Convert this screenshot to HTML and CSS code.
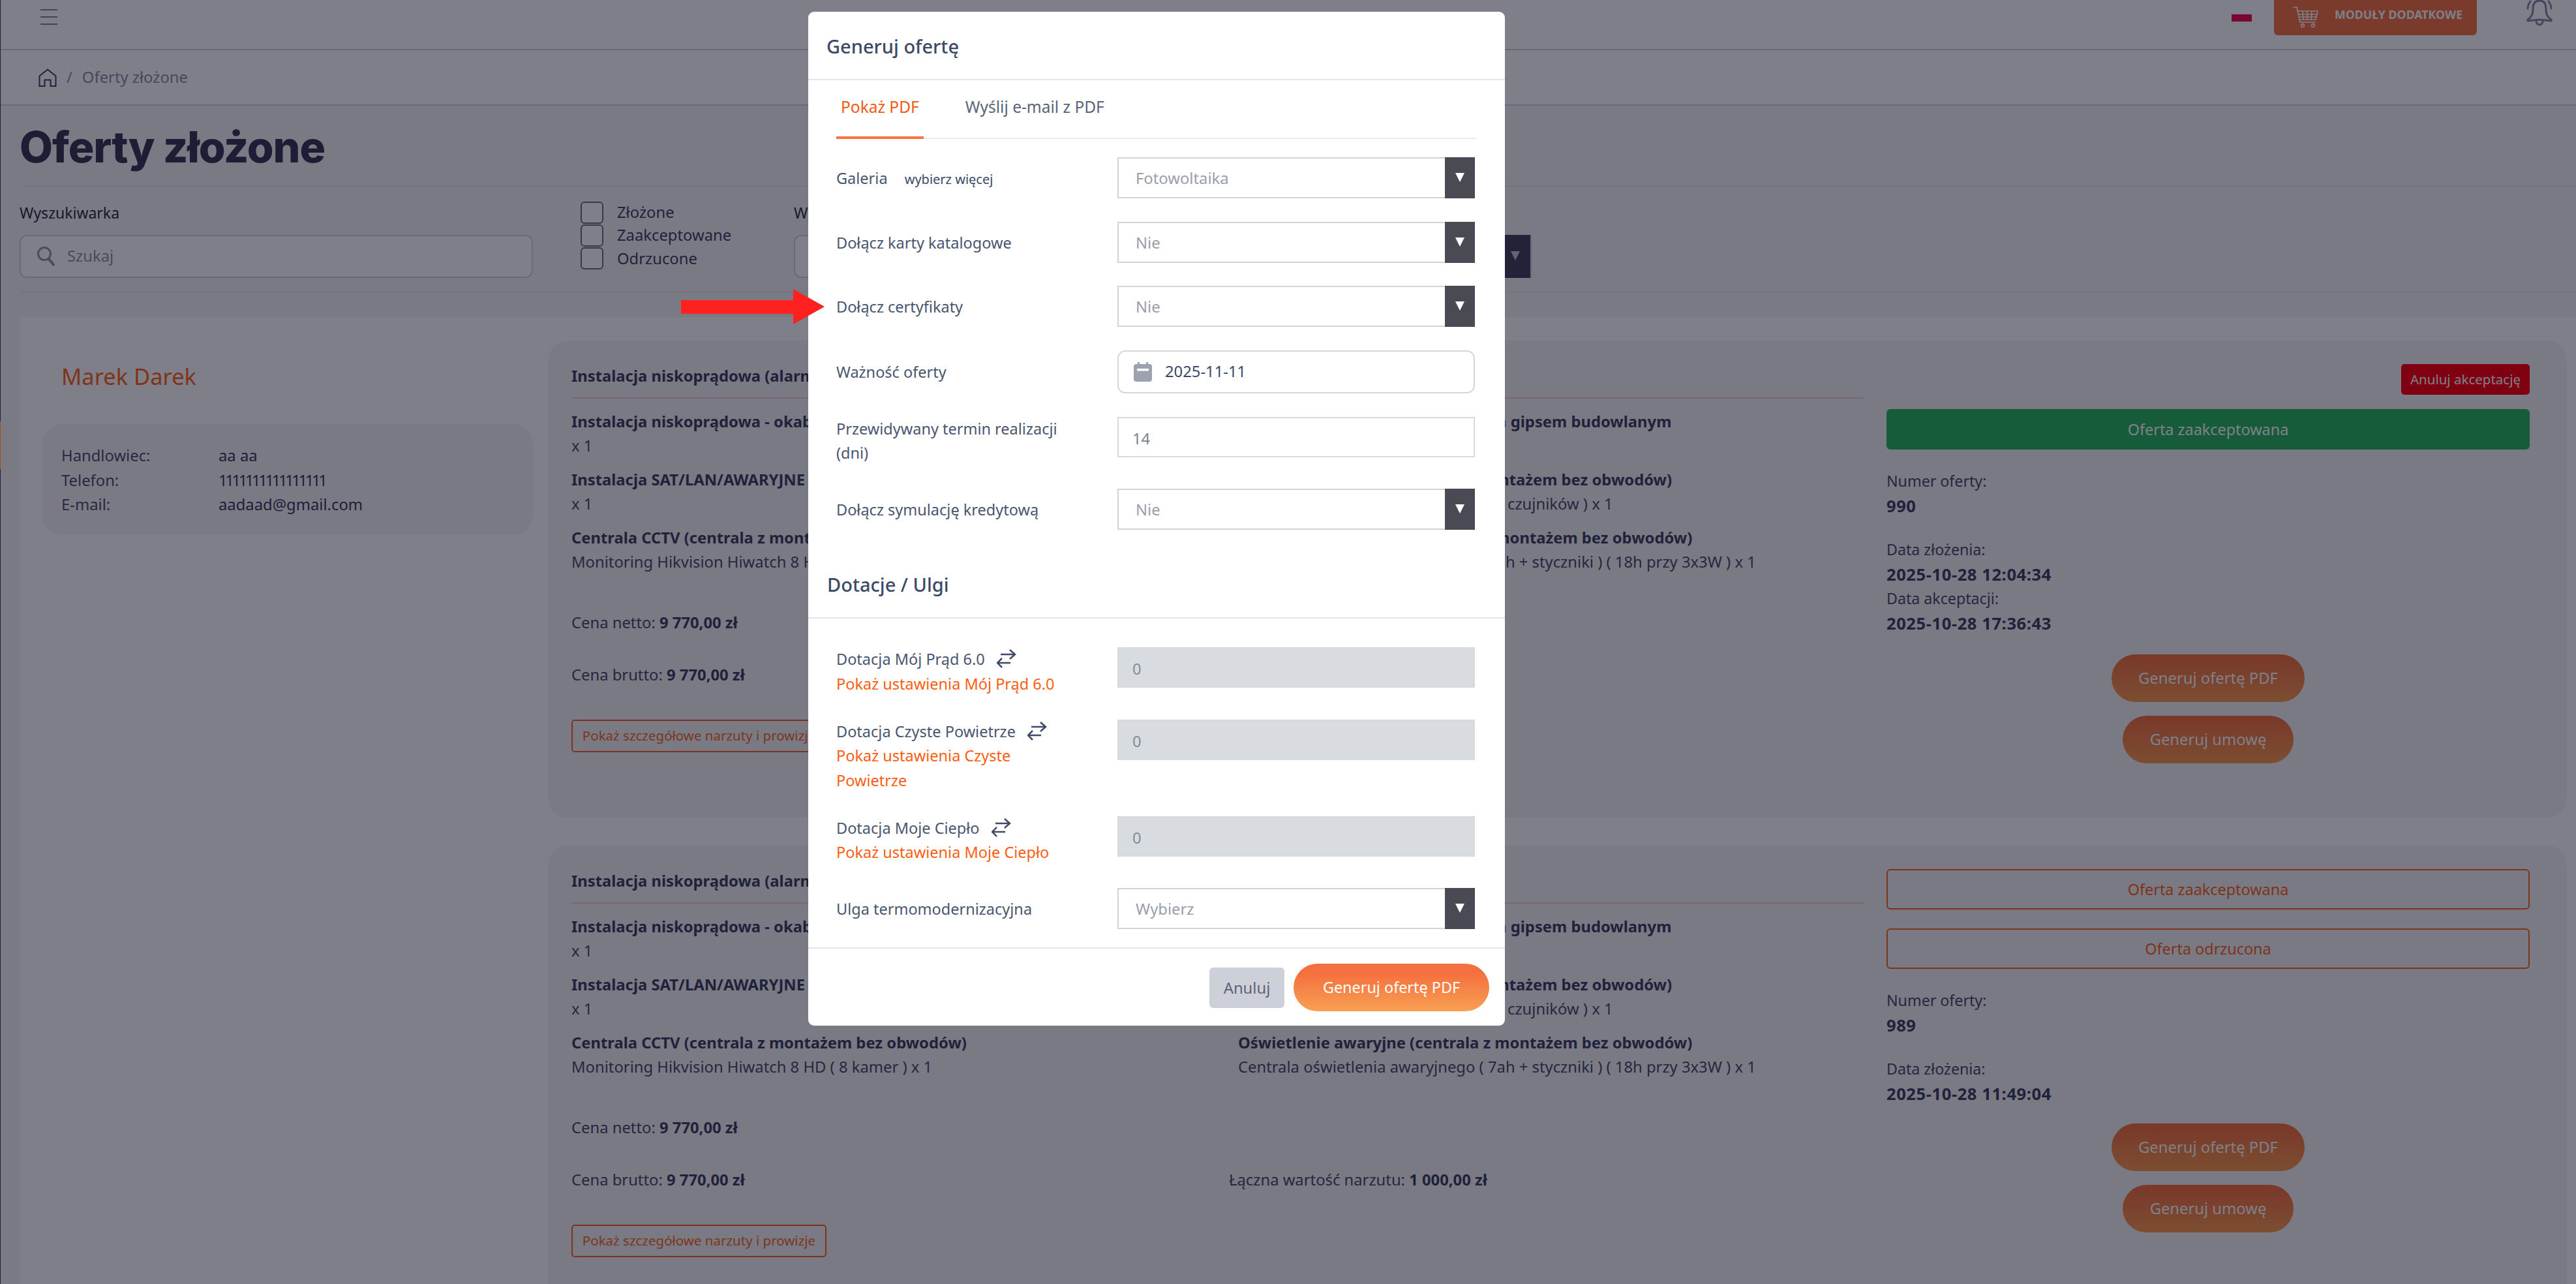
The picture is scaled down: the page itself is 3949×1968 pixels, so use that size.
FILE: index.html
```html
<!DOCTYPE html>
<html lang="pl">
<head>
<meta charset="utf-8">
<title>Oferty złożone</title>
<link rel="stylesheet" href="styles.css">
</head>
<body>
<div class="page">
  <header class="topbar">
    <div class="burger"><i></i><i></i><i></i></div>
    <div class="top-actions">
      <span class="flag"></span>
      <a class="modules">
        <svg class="cart" viewBox="0 0 42 32" width="42" height="32" fill="none" stroke="currentColor" stroke-width="1.7"><path d="M1 1h6l5 23h24M9 7h30l-3 13H12M16 7l1 13M23 7v13M30 7l-1 13M38 7M10 12h28M11 16h26"/><circle cx="16" cy="29" r="2.4"/><circle cx="32" cy="29" r="2.4"/></svg>
        <span>MODUŁY DODATKOWE</span>
      </a>
      <svg class="bell" viewBox="0 0 44 44" width="44" height="44" fill="none" stroke="currentColor" stroke-width="3" stroke-linecap="round" stroke-linejoin="round"><path d="M22 1c-7 0-10 5-10 12 0 9-2 13-8 17v2l18-2 18 2v-2c-6-4-8-8-8-17 0-7-3-12-10-12z"/><path d="M17 32a5 6 0 0 0 10 0"/><path d="M4 13c0-4 2-8 4-11M40 13c0-4-2-8-4-11"/></svg>
    </div>
  </header>

  <nav class="crumbs">
    <svg class="home" viewBox="0 0 28 28" width="28" height="28" fill="none" stroke="currentColor" stroke-width="2"><path d="M1.5 27V11.500L14 1.500 26.500 11.500V27H18.500V17.500H9.500V27Z"/></svg>
    <span class="sep">/</span>
    <span>Oferty złożone</span>
  </nav>

  <h1 class="title">Oferty złożone</h1>

  <section class="filters">
    <div class="f-search">
      <label class="f-label">Wyszukiwarka</label>
      <div class="search">
        <svg viewBox="0 0 30 32" width="30" height="32" fill="none" stroke="currentColor" stroke-width="3"><circle cx="12" cy="12" r="9.500"/><path d="M19 20l8 10" stroke-width="4"/></svg>
        <span>Szukaj</span>
      </div>
    </div>
    <div class="f-checks">
      <div class="check"><i></i>Złożone</div>
      <div class="check"><i></i>Zaakceptowane</div>
      <div class="check"><i></i>Odrzucone</div>
    </div>
    <div class="f-select">
      <label class="f-label">Wybierz</label>
      <div class="dark-select"><b class="tri"></b></div>
    </div>
  </section>

  <main class="panel">
    <aside class="client">
      <h2 class="client-name">Marek Darek</h2>
      <dl class="client-box">
        <dt>Handlowiec:</dt><dd>aa aa</dd>
        <dt>Telefon:</dt><dd class="phone">1111111111111111</dd>
        <dt>E-mail:</dt><dd>aadaad@gmail.com</dd>
      </dl>
    </aside>
    <div class="offers">
      <article class="offer">
        <div class="o-main">
          <h3 class="o-head">Instalacja niskoprądowa (alarm, CCTV, SAT, LAN)</h3>
          <div class="o-items">
            <div class="item"><b>Instalacja niskoprądowa - okablowanie</b><span>x 1</span></div>
            <div class="item"><b>Tynkowanie ścian z wykończeniem gipsem budowlanym</b><span>x 1</span></div>
            <div class="item"><b>Instalacja SAT/LAN/AWARYJNE - okablowanie</b><span>x 1</span></div>
            <div class="item"><b>Centrala alarmowa (centrala z montażem bez obwodów)</b><span>Centrala alarmowa Satel Integra ( 24 czujników ) x 1</span></div>
            <div class="item"><b>Centrala CCTV (centrala z montażem bez obwodów)</b><span>Monitoring Hikvision Hiwatch 8 HD ( 8 kamer ) x 1</span></div>
            <div class="item"><b>Oświetlenie awaryjne (centrala z montażem bez obwodów)</b><span>Centrala oświetlenia awaryjnego ( 7ah + styczniki ) ( 18h przy 3x3W ) x 1</span></div>
          </div>
          <p class="price netto">Cena netto: <b>9 770,00 zł</b></p>
          <p class="price brutto">Cena brutto: <b>9 770,00 zł</b></p>
          <a class="outline-sm">Pokaż szczegółowe narzuty i prowizje</a>
        </div>
        <div class="o-side">
          <a class="cancel">Anuluj akceptację</a>
          <div class="state accepted">Oferta zaakceptowana</div>
          <div class="meta">
            <p>Numer oferty:<b>990</b></p>
            <p class="gap">Data złożenia:<b>2025-10-28 12:04:34</b></p>
            <p>Data akceptacji:<b>2025-10-28 17:36:43</b></p>
          </div>
          <div class="gen">
            <a class="pill p-pdf">Generuj ofertę PDF</a>
            <a class="pill p-umowa">Generuj umowę</a>
          </div>
        </div>
      </article>

      <article class="offer">
        <div class="o-main">
          <h3 class="o-head">Instalacja niskoprądowa (alarm, CCTV, SAT, LAN)</h3>
          <div class="o-items">
            <div class="item"><b>Instalacja niskoprądowa - okablowanie</b><span>x 1</span></div>
            <div class="item"><b>Tynkowanie ścian z wykończeniem gipsem budowlanym</b><span>x 1</span></div>
            <div class="item"><b>Instalacja SAT/LAN/AWARYJNE - okablowanie</b><span>x 1</span></div>
            <div class="item"><b>Centrala alarmowa (centrala z montażem bez obwodów)</b><span>Centrala alarmowa Satel Integra ( 24 czujników ) x 1</span></div>
            <div class="item"><b>Centrala CCTV (centrala z montażem bez obwodów)</b><span>Monitoring Hikvision Hiwatch 8 HD ( 8 kamer ) x 1</span></div>
            <div class="item"><b>Oświetlenie awaryjne (centrala z montażem bez obwodów)</b><span>Centrala oświetlenia awaryjnego ( 7ah + styczniki ) ( 18h przy 3x3W ) x 1</span></div>
          </div>
          <p class="price netto">Cena netto: <b>9 770,00 zł</b></p>
          <div class="price brutto split">
            <span>Cena brutto: <b>9 770,00 zł</b></span>
            <span>Łączna wartość narzutu: <b>1 000,00 zł</b></span>
          </div>
          <a class="outline-sm">Pokaż szczegółowe narzuty i prowizje</a>
        </div>
        <div class="o-side">
          <div class="state outlined">Oferta zaakceptowana</div>
          <div class="state outlined second">Oferta odrzucona</div>
          <div class="meta">
            <p>Numer oferty:<b>989</b></p>
            <p class="gap">Data złożenia:<b>2025-10-28 11:49:04</b></p>
          </div>
          <div class="gen tight">
            <a class="pill p-pdf">Generuj ofertę PDF</a>
            <a class="pill p-umowa">Generuj umowę</a>
          </div>
        </div>
      </article>
    </div>
  </main>
</div>

<div class="overlay"></div>
<i class="edge-mark"></i>

<div class="modal">
  <div class="m-head">Generuj ofertę</div>
  <div class="tabs">
    <a class="tab active">Pokaż PDF</a>
    <a class="tab">Wyślij e-mail z PDF</a>
  </div>
  <div class="m-rows">
    <div class="row mid"><div class="lbl">Galeria <small>wybierz więcej</small></div><div class="sel ph">Fotowoltaika<b class="tri"></b></div></div>
    <div class="row mid"><div class="lbl">Dołącz karty katalogowe</div><div class="sel ph">Nie<b class="tri"></b></div></div>
    <div class="row mid"><div class="lbl">Dołącz certyfikaty</div><div class="sel ph">Nie<b class="tri"></b></div></div>
    <div class="row mid date-row"><div class="lbl">Ważność oferty</div>
      <div class="date">
        <svg viewBox="0 0 28 30" width="28" height="30"><path fill="#9ea2ae" d="M6 0h3v3h10V0h3v3h2a4 4 0 0 1 4 4v19a4 4 0 0 1-4 4H4a4 4 0 0 1-4-4V7a4 4 0 0 1 4-4h2z"/><rect x="5" y="10" width="18" height="3.500" rx="1" fill="#fff"/></svg>
        <span>2025-11-11</span>
      </div>
    </div>
    <div class="row"><div class="lbl">Przewidywany termin realizacji (dni)</div><div class="inp">14</div></div>
    <div class="row mid last"><div class="lbl">Dołącz symulację kredytową</div><div class="sel ph">Nie<b class="tri"></b></div></div>
  </div>
  <div class="m-sub">Dotacje / Ulgi</div>
  <div class="m-rows sub-rows">
    <div class="row"><div class="lbl">Dotacja Mój Prąd 6.0 <svg class="swap" viewBox="0 0 30 30" width="30" height="30" fill="none" stroke="currentColor" stroke-width="2.500"><path d="M6 8h22M20 1l8 7-8 7M21 21H1M8 14l-7 7 7 7"/></svg><a class="lnk">Pokaż ustawienia Mój Prąd 6.0</a></div><div class="inp off">0</div></div>
    <div class="row"><div class="lbl">Dotacja Czyste Powietrze <svg class="swap" viewBox="0 0 30 30" width="30" height="30" fill="none" stroke="currentColor" stroke-width="2.500"><path d="M6 8h22M20 1l8 7-8 7M21 21H1M8 14l-7 7 7 7"/></svg><a class="lnk">Pokaż ustawienia Czyste Powietrze</a></div><div class="inp off">0</div></div>
    <div class="row"><div class="lbl">Dotacja Moje Ciepło <svg class="swap" viewBox="0 0 30 30" width="30" height="30" fill="none" stroke="currentColor" stroke-width="2.500"><path d="M6 8h22M20 1l8 7-8 7M21 21H1M8 14l-7 7 7 7"/></svg><a class="lnk">Pokaż ustawienia Moje Ciepło</a></div><div class="inp off">0</div></div>
    <div class="row mid last"><div class="lbl">Ulga termomodernizacyjna</div><div class="sel ph">Wybierz<b class="tri"></b></div></div>
  </div>
  <div class="m-foot">
    <a class="btn-cancel">Anuluj</a>
    <a class="pill-main">Generuj ofertę PDF</a>
  </div>
</div>

<svg class="red-arrow" viewBox="0 0 220 54" width="220" height="54"><path fill="#ff2020" d="M0 17h172V0l48 27-48 27V38H0z"/></svg>
</body>
</html>
```

FILE: styles.css
```css
* { box-sizing: border-box; }
html, body { margin: 0; height: 100%; overflow: hidden; }
body {
  font-family: "Noto Sans", "Open Sans", sans-serif;
  font-size: 23.800px;
  line-height: 37.5px;
  color: #414762;
  background: #f4f4f6;
}
a { display: block; }
p, h1, h2, h3, dl, dd { margin: 0; }

.page { border-left: 1px solid #3a3c5c; height: 100vh; overflow: hidden; }

/* top bar */
.topbar {
  height: 77px;
  background: #fff;
  border-bottom: 2px solid #d2d2da;
  display: flex;
  justify-content: space-between;
  padding-left: 61px;
}
.burger { width: 26px; padding-top: 14px; display: flex; flex-direction: column; gap: 9px; }
.burger i { display: block; height: 2px; background: #84869c; }
.top-actions { display: flex; align-items: flex-start; }
.flag { width: 31px; height: 22px; margin: 11px 34px 0 0; background: linear-gradient(#fff 50%, #f0104e 50%); }
.modules {
  width: 311px;
  height: 54px;
  margin-right: 74px;
  display: flex;
  align-items: center;
  padding: 0 0 8px 28px;
  background: #f47444;
  border-radius: 0 0 6px 6px;
  color: #fff;
  font-size: 17.800px;
  font-weight: 700;
}
.modules span { margin-left: 23px; }
.cart { margin-top: 6px; }
.bell { color: #8a8ca4; margin-right: 34px; }

/* breadcrumbs */
.crumbs {
  height: 85px;
  background: #fff;
  border-bottom: 2px solid #d0d0dc;
  display: flex;
  align-items: center;
  padding-left: 58px;
  color: #8d92a8;
}
.home { color: #3e4468; margin-right: 15px; }
.sep { margin-right: 15px; }

/* title and filters */
.title {
  height: 122px;
  margin-left: 29px;
  padding-top: 28px;
  font-family: "Inter", sans-serif;
  font-weight: 800;
  font-size: 66px;
  line-height: 70px;
  letter-spacing: -1.100px;
  color: #3a3c56;
}
.filters {
  margin-left: 29px;
  height: 165px;
  padding-top: 22px;
  border-top: 2px solid #eaeaee;
  border-bottom: 2px solid #eaeaee;
  display: flex;
}
.f-label { display: block; margin-bottom: 14px; color: #2e3040; font-size: 23px; }
.f-search { width: 787px; margin-right: 73px; }
.search {
  height: 66px;
  border: 2px solid #d2d2de;
  border-radius: 11px;
  background: #fff;
  display: flex;
  align-items: center;
  padding-left: 24px;
  gap: 17px;
  color: #9497a9;
}
.f-checks { width: 327px; }
.check { height: 35.300px; display: flex; align-items: center; gap: 21px; color: #414762; line-height: 35px; }
.check i { display: block; width: 35px; height: 34px; border: 2px solid #6e7086; border-radius: 6px; background: #fff; }
.f-select { width: 1131px; }
.dark-select {
  height: 66px;
  border: 2px solid #d2d2de;
  border-radius: 11px 0 0 11px;
  background: #fff;
  position: relative;
}
.dark-select .tri { position: absolute; right: 0; top: -2px; width: 60px; height: 66px; background: #44465c; }
.dark-select .tri::after {
  content: "";
  position: absolute;
  right: 16px;
  top: 25px;
  border: 7px solid transparent;
  border-top: 14px solid #c8c8d4;
  border-bottom: 0;
}

/* panel */
.panel {
  margin: 37px 0 0 29px;
  padding-top: 36px;
  background: #fff;
  display: flex;
  height: 1600px;
}
.client { width: 810px; padding-left: 35px; flex: none; }
.client-name {
  padding: 35px 0 0 29px;
  height: 128px;
  font-size: 34.500px;
  font-weight: 400;
  line-height: 40px;
  color: #fb6a1e;
}
.client-box {
  width: 752px;
  height: 170px;
  padding: 30px 29px;
  background: #f4f4f6;
  border-radius: 30px;
  display: grid;
  grid-template-columns: 241px 1fr;
}
.client-box dt { color: #4e546e; }
.client-box dd { color: #3a3f5c; }
.client-box .phone { letter-spacing: -3.400px; }

.offers { flex: 1; margin-right: 14px; display: flex; flex-direction: column; gap: 43px; }
.offer {
  background: #f4f4f6;
  border-radius: 30px;
  padding: 36px 57px 83px 36px;
  display: grid;
  grid-template-columns: 1981px 986px;
  column-gap: 35px;
}
.o-head {
  padding-bottom: 13px;
  margin-bottom: 17px;
  border-bottom: 2px solid #f0d0d0;
  font-size: 23.800px;
  font-weight: 700;
  color: #3f4560;
  white-space: nowrap;
}
.o-items { display: grid; grid-template-columns: 1022px 1fr; row-gap: 14px; }
.item { white-space: nowrap; }
.item b { display: block; font-weight: 700; color: #3f4560; }
.item span { display: block; color: #4a5068; }
.price { color: #4a5068; height: 37.5px; }
.price b { color: #3f4560; font-weight: 700; }
.netto { margin-top: 55px; }
.brutto { margin-top: 43px; }
.split { display: grid; grid-template-columns: 1008px 1fr; }
.outline-sm {
  width: 391px;
  height: 50px;
  margin-top: 49px;
  border: 2px solid #fb6a1e;
  border-radius: 5px;
  display: flex;
  align-items: center;
  justify-content: center;
  font-size: 20.500px;
  color: #fb6a1e;
  white-space: nowrap;
}

.o-side { display: flex; flex-direction: column; }
.cancel {
  align-self: flex-end;
  width: 197px;
  height: 47px;
  margin-bottom: 22px;
  border-radius: 5px;
  background: #fe000c;
  color: #fff;
  font-size: 20.500px;
  line-height: 47px;
  text-align: center;
}
.state { height: 62px; border-radius: 6px; text-align: center; line-height: 62px; font-size: 23.400px; }
.accepted { background: #2eb860; color: #fff; }
.outlined { border: 2px solid #fb6a1e; color: #fb6a1e; line-height: 58px; }
.second { margin-top: 29px; }
.meta { margin-top: 30px; color: #4a5068; font-size: 23.200px; }
.meta p { display: block; }
.meta b { display: block; color: #3f4560; font-weight: 700; font-size: 25.500px; letter-spacing: .6px; }
.gap { margin-top: 30px; }
.gen { margin-top: 29px; display: flex; flex-direction: column; align-items: center; gap: 21px; }
.gen.tight { margin-top: 27px; }
.pill {
  height: 73px;
  border-radius: 37px;
  background: linear-gradient(#f4703f, #f89c50);
  color: #fff;
  display: flex;
  align-items: center;
  justify-content: center;
}
.p-pdf { width: 296px; }
.p-umowa { width: 262px; }

/* overlay */
.overlay { position: fixed; inset: 0; background: rgba(0, 0, 20, .5); }
.edge-mark { position: fixed; left: 0; top: 646px; width: 1px; height: 73px; background: #a8501c; }

/* modal */
.modal {
  position: fixed;
  left: 1239px;
  top: 18px;
  width: 1068px;
  height: 1554px;
  background: #fff;
  border-radius: 9px;
  color: #4a5570;
}
.m-head {
  height: 105px;
  padding: 33px 0 0 28px;
  border-bottom: 2px solid #e4e6ec;
  font-size: 29px;
  font-weight: 500;
  line-height: 40px;
  color: #3c4a66;
}
.tabs {
  margin: 0 44px 28px 43px;
  height: 90px;
  display: flex;
  gap: 57px;
  border-bottom: 2px solid #eaebef;
}
.tab { height: 90px; padding: 22px 7px 0; line-height: 37.5px; font-size: 24.500px; color: #5a6478; }
.tab.active { color: #f05a14; border-bottom: 4px solid #f9743e; }
.m-rows { padding-left: 43px; }
.row {
  display: grid;
  grid-template-columns: 431px 548px;
  margin-bottom: 35.500px;
}
.row.mid { align-items: center; }
.row.mid .lbl { padding-top: 3px; }
.row.last { margin-bottom: 0; }
.date-row { margin-bottom: 36px; }
.lbl { padding-right: 62px; font-size: 23.500px; }
.lbl small { font-size: 20px; margin-left: 20px; color: #3c4a66; }
.swap { margin-left: 12px; vertical-align: -6px; color: #3f4a66; }
.lnk { color: #fb5e10; }
.sel {
  height: 63px;
  padding-left: 26px;
  border: 2px solid #d2d3d6;
  line-height: 60px;
  position: relative;
}
.ph { color: #9a9eaa; }
.sel .tri { position: absolute; right: -2px; top: -2px; width: 46px; height: 63px; background: #4a4a54; }
.sel .tri::after {
  content: "";
  position: absolute;
  left: 16px;
  top: 24px;
  border: 7px solid transparent;
  border-top: 14px solid #fff;
  border-bottom: 0;
}
.date {
  height: 66px;
  border: 2px solid #d4d6e0;
  border-radius: 12px;
  display: flex;
  align-items: center;
  padding-left: 23px;
  gap: 20px;
  color: #3c4a66;
}
.inp {
  height: 62px;
  padding-left: 21px;
  border: 2px solid #d8d9dc;
  line-height: 62px;
  color: #7c8292;
}
.off { background: #d8dbe0; color: #858b9b; }
.m-sub {
  height: 72px;
  margin-top: 64px;
  padding-left: 29px;
  border-bottom: 2px solid #e4e6ec;
  font-size: 29px;
  font-weight: 500;
  line-height: 40px;
  color: #3c4a66;
}
.sub-rows { padding-top: 44px; }
.m-foot {
  margin-top: 28px;
  height: 121px;
  border-top: 2px solid #e4e6ec;
  display: flex;
  align-items: center;
  justify-content: flex-end;
  padding: 0 24px 0;
  gap: 14px;
}
.btn-cancel {
  width: 115px;
  height: 62px;
  border-radius: 6px;
  background: #cdd0d8;
  color: #5c6478;
  text-align: center;
  line-height: 62px;
}
.pill-main {
  width: 300px;
  height: 73px;
  border-radius: 37px;
  background: linear-gradient(#f4703f 20%, #f8a052);
  color: #fff;
  text-align: center;
  line-height: 73px;
  font-size: 23.400px;
}
.red-arrow { position: fixed; left: 1044px; top: 443px; }
```
